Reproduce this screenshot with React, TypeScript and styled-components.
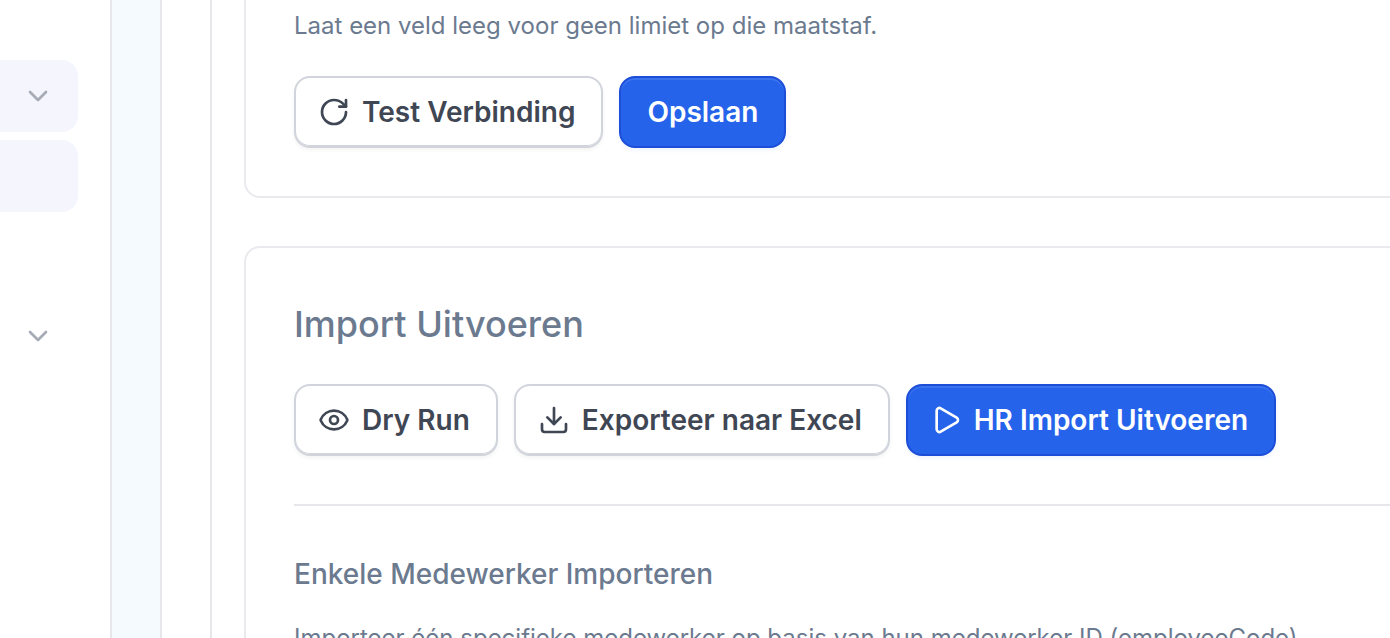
import { createGlobalStyle, styled } from "styled-components";
import { ChevronDown, Download, Eye, Play, RotateCw } from "lucide-react";

const GlobalStyle = createGlobalStyle`
  html, body {
    margin: 0;
    height: 100%;
    background: #ffffff;
    overflow: hidden;
    font-family: Inter, "Liberation Sans", sans-serif;
  }
`;

const navItems = [
  { active: true, chevron: true },
  { active: true, chevron: false },
  { active: false, chevron: false },
  { active: false, chevron: true },
];

const App = () => {
  return (
    <Page>
      <GlobalStyle />
      <Sidebar>
        {navItems.map((item, i) => (
          <NavItem key={i} $active={item.active}>
            {item.chevron && <ChevronDown size={32} strokeWidth={2} />}
          </NavItem>
        ))}
      </Sidebar>
      <Stripe />
      <Gutter />
      <Main>
        <Card $first>
          <Hint>Laat een veld leeg voor geen limiet op die maatstaf.</Hint>
          <ButtonRow>
            <Button>
              <RotateCw size={32} strokeWidth={2} />
              Test Verbinding
            </Button>
            <Button $primary>Opslaan</Button>
          </ButtonRow>
        </Card>
        <Card>
          <Title>Import Uitvoeren</Title>
          <ButtonRow>
            <Button>
              <Eye size={32} strokeWidth={2} />
              Dry Run
            </Button>
            <Button>
              <Download size={32} strokeWidth={2} />
              Exporteer naar Excel
            </Button>
            <Button $primary>
              <Play size={32} strokeWidth={2} />
              HR Import Uitvoeren
            </Button>
          </ButtonRow>
          <Divider />
          <Subtitle>Enkele Medewerker Importeren</Subtitle>
          <Paragraph>
            Importeer één specifieke medewerker op basis van hun medewerker ID (employeeCode).
          </Paragraph>
        </Card>
      </Main>
    </Page>
  );
};

export default App;

const Page = styled.div`
  display: flex;
  width: 1390px;
  height: 638px;
  overflow: hidden;
  background: #ffffff;
`;

const Sidebar = styled.aside`
  flex: 0 0 112px;
  box-sizing: border-box;
  display: flex;
  flex-direction: column;
  gap: 8px;
  padding: 60px 32px 0 0;
  border-right: 2px solid #e5e7eb;
  overflow: hidden;
`;

const NavItem = styled.div<{ $active: boolean }>`
  flex: 0 0 72px;
  margin-left: -16px;
  padding-right: 24px;
  display: flex;
  align-items: center;
  justify-content: flex-end;
  border-radius: 16px;
  background: ${(p) => (p.$active ? "#f4f5fd" : "transparent")};
  color: #a6abb6;
`;

const Stripe = styled.div`
  flex: 0 0 50px;
  box-sizing: border-box;
  background: #f5faff;
  border-right: 2px solid #e5e7eb;
`;

const Gutter = styled.div`
  flex: 0 0 50px;
  box-sizing: border-box;
  border-right: 2px solid #e5e7eb;
`;

const Main = styled.main`
  flex: 1;
  min-width: 0;
  display: flex;
  flex-direction: column;
  gap: 48px;
  padding-left: 32px;
`;

const Card = styled.section<{ $first?: boolean }>`
  flex: none;
  width: 1400px;
  box-sizing: border-box;
  padding: 48px;
  margin-top: ${(p) => (p.$first ? "-42px" : "0")};
  border: 2px solid #e9eaee;
  border-radius: 16px;
  background: #ffffff;
`;

const Hint = styled.p`
  margin: 0 0 32px;
  font-size: 24px;
  line-height: 36px;
  color: #6b7a8f;
`;

const ButtonRow = styled.div`
  display: flex;
  gap: 16px;
`;

const Button = styled.button<{ $primary?: boolean }>`
  height: 72px;
  box-sizing: border-box;
  display: inline-flex;
  align-items: center;
  gap: 12px;
  padding: 0 26px;
  border: 2px solid ${(p) => (p.$primary ? "#1d4ed8" : "#d1d5db")};
  border-radius: 16px;
  background: ${(p) => (p.$primary ? "#2563eb" : "#ffffff")};
  color: ${(p) => (p.$primary ? "#ffffff" : "#3f4654")};
  font-family: inherit;
  font-size: 28px;
  font-weight: 600;
  white-space: nowrap;
  box-shadow: ${(p) =>
    p.$primary
      ? "inset 0 2px 0 rgba(255, 255, 255, 0.1), 0 2px 4px rgba(37, 99, 235, 0.08)"
      : "inset 0 -1px 0 #d1d5db, 0 2px 4px rgba(0, 0, 0, 0.05)"};

  svg {
    margin-left: -4px;
    flex: none;
  }
`;

const Title = styled.h2`
  margin: 0 0 32px;
  font-size: 36px;
  line-height: 56px;
  font-weight: 500;
  color: #6b7a8f;
`;

const Divider = styled.hr`
  margin: 48px 0;
  border: 0;
  border-top: 2px solid #e5e7eb;
`;

const Subtitle = styled.h3`
  margin: 0 0 24px;
  font-size: 28px;
  line-height: 40px;
  font-weight: 500;
  color: #6b7a8f;
`;

const Paragraph = styled.p`
  margin: 0;
  font-size: 24px;
  line-height: 40px;
  color: #6b7a8f;
`;
